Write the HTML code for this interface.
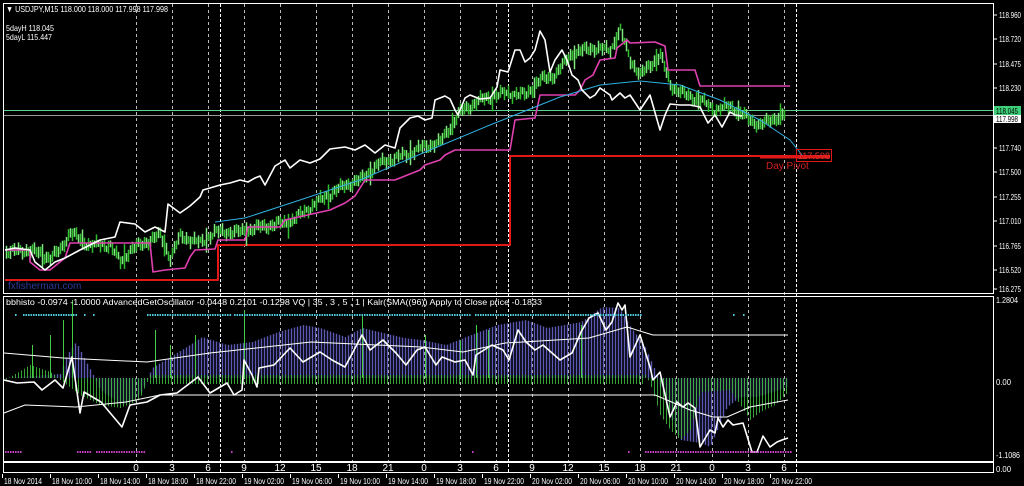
<!DOCTYPE html>
<html><head><meta charset="utf-8"><style>
html,body{margin:0;padding:0;background:#000;width:1024px;height:486px;overflow:hidden}
svg{display:block}
text{font-family:"Liberation Sans",sans-serif;font-size:9px;fill:#fff}
</style></head><body>
<svg id="s" width="1024" height="486" viewBox="0 0 1024 486" xmlns="http://www.w3.org/2000/svg">
<rect width="1024" height="486" fill="#000"/>
<g id="grid"></g>
<g id="bars"></g>
<g id="main"></g>
<rect x="3.5" y="3.5" width="990" height="290" fill="none" stroke="#fff" stroke-width="1"/>
<rect x="3.5" y="296.5" width="990" height="165" fill="none" stroke="#fff" stroke-width="1"/>
<rect x="3.5" y="462.5" width="990" height="10" fill="none" stroke="#fff" stroke-width="1"/>
<g id="txt"></g>
</svg>
<script>
var NS="http://www.w3.org/2000/svg";
function el(p,t,a,txt){var e=document.createElementNS(NS,t);for(var k in a)e.setAttribute(k,a[k]);if(txt!=null)e.textContent=txt;document.getElementById(p).appendChild(e);return e;}
function pl(p,pts,c,w){el(p,'polyline',{points:pts.map(function(q){return q.join(',')}).join(' '),fill:'none',stroke:c,'stroke-width':w||1,'stroke-linejoin':'round'});}
function interp(pts,x){for(var i=0;i<pts.length-1;i++){if(x>=pts[i][0]&&x<=pts[i+1][0]){var t=(x-pts[i][0])/(pts[i+1][0]-pts[i][0]);return pts[i][1]+t*(pts[i+1][1]-pts[i][1]);}}return pts[pts.length-1][1];}
for(var x=136;x<=784;x+=36){el('grid','line',{x1:x+.5,y1:4,x2:x+.5,y2:461,stroke:'#bbb','stroke-dasharray':'3 3','stroke-width':1});}
[220,508,796].forEach(function(x){el('grid','line',{x1:x+.5,y1:4,x2:x+.5,y2:472,stroke:'#fff','stroke-dasharray':'3 2','stroke-width':1});});
var Z=378;
var purp=[[5,378],[60,374],[67,355],[76,342],[84,358],[93,375],[100,390],[122,405],[140,395],[152,368],[185,348],[202,337],[227,345],[252,342],[278,332],[303,325],[320,328],[345,337],[362,328],[379,332],[404,338],[421,340],[446,345],[471,335],[497,325],[526,320],[547,328],[581,322],[602,307],[619,308],[631,328],[644,345],[657,375],[660,387],[673,423],[680,440],[700,443],[710,447],[720,423],[727,407],[740,397],[757,397],[788,387]];
for(var x=6;x<=788;x+=3){var y=interp(purp,x);el('bars','line',{x1:x+.5,y1:Z,x2:x+.5,y2:y,stroke:'#5a5ab4','stroke-width':1.4});}
var grn=[[5,380],[30,365],[50,372],[60,380],[80,395],[100,405],[120,408],[139,400],[150,375],[645,375],[650,384],[660,415],[670,430],[680,440],[690,430],[700,392],[730,390],[740,405],[750,420],[760,412],[775,405],[788,392]];
for(var x=6;x<=788;x+=3){var y=interp(grn,x);var y0=(x>=150&&x<645)?384:Z;el('bars','line',{x1:x+.5,y1:y0,x2:x+.5,y2:y,stroke:'#3cb43c','stroke-width':0.9});}
[[32,345],[50,335],[63,320],[72,300],[195,335],[244,310],[362,315],[425,335],[476,325],[488,330],[581,325],[155,330],[170,345],[460,340]].forEach(function(s){el('bars','line',{x1:s[0]+.5,y1:Z,x2:s[0]+.5,y2:s[1],stroke:'#4c4','stroke-width':1});});
pl('bars',[[4,353],[63,358],[147,362],[210,353],[311,342],[421,347],[463,352],[505,343],[589,338],[627,327],[653,335],[788,335]],'#fff',1);
pl('bars',[[4,413],[25,405],[76,407],[126,402],[160,395],[252,395],[600,395],[655,395],[667,400],[690,410],[713,417],[727,417],[750,407],[788,400]],'#fff',1);
pl('bars',[[4,380],[17,383],[34,382],[42,390],[55,380],[63,388],[72,357],[80,413],[84,392],[101,402],[122,427],[130,405],[147,402],[160,395],[177,393],[198,377],[210,393],[227,383],[234,395],[242,390],[244,360],[252,375],[257,387],[259,368],[274,365],[290,348],[303,362],[320,352],[332,360],[345,367],[362,335],[370,350],[383,340],[396,353],[406,365],[417,350],[425,347],[436,365],[442,357],[455,362],[465,360],[473,375],[476,355],[492,345],[503,350],[509,360],[518,330],[526,342],[535,350],[543,345],[560,360],[572,353],[581,332],[589,318],[598,313],[606,330],[612,322],[618,303],[622,310],[625,305],[630,357],[640,335],[650,367],[653,380],[660,372],[670,417],[677,402],[683,407],[688,403],[695,408],[700,447],[710,430],[715,433],[718,418],[723,427],[728,420],[733,425],[743,423],[752,452],[757,452],[763,436],[770,447],[777,442],[782,440],[788,438]],'#fff',1.6);
function dots(y,c,ranges){ranges.forEach(function(r){for(var x=r[0];x<=r[1];x+=2.5)el('bars','rect',{x:x,y:y,width:1.6,height:2,fill:c});});}
dots(314,'#4cc8d8',[[15,16],[23,77],[84,85],[93,94],[147,230],[234,470],[475,640],[733,734],[743,744]]);
dots(451,'#c040c0',[[5,22],[77,90],[96,145],[231,232],[472,473],[628,629],[645,790]]);
el('main','line',{x1:4,y1:110.5,x2:993,y2:110.5,stroke:'#5fd08a','stroke-width':1});
el('main','line',{x1:4,y1:115.5,x2:993,y2:115.5,stroke:'#999','stroke-width':1});
pl('main',[[5,280],[218,280],[218,245],[510,245],[510,156],[830,156]],'#e01818',2);
pl('main',[[760,157],[830,157]],'#e01818',3);
var gc=[[5,252],[30,250],[50,258],[60,250],[70,232],[80,240],[90,245],[110,245],[120,262],[130,250],[150,240],[160,235],[170,258],[180,236],[200,243],[215,232],[240,232],[260,227],[290,222],[320,200],[345,185],[360,180],[380,163],[405,155],[420,148],[440,142],[460,112],[480,100],[505,93],[525,95],[540,80],[555,75],[570,55],[590,48],[610,50],[620,30],[630,60],[640,75],[660,55],[670,85],[685,95],[700,100],[715,110],[730,106],[750,120],[760,125],[775,118],[785,114]];
for(var x=6;x<=785;x+=2){var c=interp(gc,x);var n=Math.sin(x*0.9)*2+Math.sin(x*0.31)*2;var h=6+Math.abs(Math.sin(x*0.77))*7;if(x%41<2)h+=12;var yc=c+n;
el('main','line',{x1:x+.5,y1:yc-h/2,x2:x+.5,y2:yc+h/2,stroke:(x%4==0)?'#2fbf2f':'#7fe87f','stroke-width':1.5});}
pl('main',[[5,250],[30,250],[30,262],[40,270],[50,270],[60,262],[65,258],[70,243],[150,243],[153,272],[165,270],[185,268],[190,257],[195,250],[215,249],[218,240],[245,240],[248,227],[280,227],[285,220],[330,210],[345,203],[355,196],[365,180],[395,180],[420,170],[425,165],[440,160],[445,155],[455,150],[510,150],[515,120],[535,118],[540,95],[575,95],[580,90],[585,80],[593,75],[600,60],[615,58],[617,48],[627,40],[630,43],[655,42],[665,46],[668,70],[695,70],[700,86],[790,86]],'#e040b0',1.6);
pl('main',[[215,222],[245,218],[300,200],[360,180],[430,150],[490,125],[560,97],[600,85],[640,81],[680,85],[720,100],[760,120],[790,140],[802,155]],'#30b0e0',1);
pl('main',[[5,250],[15,248],[30,250],[35,262],[45,270],[55,262],[65,258],[80,250],[100,240],[115,237],[120,222],[135,224],[145,232],[155,227],[165,232],[168,204],[180,213],[190,206],[200,197],[203,190],[210,188],[220,185],[230,183],[240,180],[248,182],[255,178],[260,176],[265,185],[275,166],[285,160],[290,168],[300,160],[310,163],[320,159],[330,149],[345,147],[355,150],[365,145],[375,153],[385,145],[395,148],[400,128],[410,118],[418,116],[425,120],[432,118],[435,100],[445,96],[450,99],[455,110],[458,115],[465,98],[470,95],[480,99],[490,98],[497,87],[500,70],[508,72],[515,50],[520,50],[525,62],[530,58],[535,50],[540,31],[545,40],[550,72],[555,60],[562,50],[567,60],[572,75],[578,80],[582,90],[590,98],[595,95],[600,88],[610,95],[612,100],[620,93],[625,98],[630,95],[640,110],[650,95],[660,130],[665,115],[670,104],[680,105],[690,105],[700,107],[708,123],[715,115],[722,127],[730,112],[735,115],[742,116]],'#fff',1.6);
el('main','rect',{x:796.5,y:149.5,width:35,height:12,fill:'none',stroke:'#e01818'});
el('main','text',{x:798,y:159,style:'fill:#e03030;font-size:9.5px',textLength:32,lengthAdjust:'spacingAndGlyphs'},'117.598');
el('main','text',{x:766,y:169,style:'fill:#d02020;font-size:10px'},'Day Pivot');
el('txt','text',{x:6,y:12,textLength:162,lengthAdjust:'spacingAndGlyphs',style:'font-size:8.5px'},'\u25BC USDJPY,M15  118.000 118.000 117.998 117.998');
el('txt','text',{x:6,y:31,textLength:48,lengthAdjust:'spacingAndGlyphs',style:'font-size:8.5px'},'5dayH 118.045');
el('txt','text',{x:6,y:40,textLength:46,lengthAdjust:'spacingAndGlyphs',style:'font-size:8.5px'},'5dayL 115.447');
el('txt','text',{x:8,y:289,style:'fill:#2a3a9a;font-size:10px'},'fxfisherman.com');
el('txt','text',{x:6,y:305,style:'font-size:8.5px',textLength:536,lengthAdjust:'spacingAndGlyphs'},'bbhisto -0.0974 -1.0000  AdvancedGetOscillator -0.0448 0.2101 -0.1298  VQ | 35 , 3 , 5 , 1 |  Kalr(SMA((96)) Apply to Close price -0.1833');
var pr=[['118.960',18],['118.720',42],['118.475',67],['118.230',91],['117.740',151],['117.500',175],['117.255',200],['117.010',224],['116.765',249],['116.520',273],['116.275',292]];
function lab(x,y,s,len,st){el('txt','text',{x:x,y:y,style:'font-size:8px;'+(st||''),textLength:len,lengthAdjust:'spacingAndGlyphs'},s);}
pr.forEach(function(p){el('txt','line',{x1:994,y1:p[1]-3,x2:997,y2:p[1]-3,stroke:'#fff'});lab(999,p[1],p[0],22);});
el('txt','rect',{x:994,y:106,width:27,height:9,fill:'#3ccf78'});
lab(996,114,'118.045',22,'fill:#000');
el('txt','rect',{x:994,y:115,width:27,height:8,fill:'#fff'});
lab(996,122,'117.998',22,'fill:#000');
lab(996,303,'1.2804',22);
lab(996,385,'0.00',15);
lab(996,458,'-1.1086',24);
lab(996,472,'0.00',15);
var hs=['0','3','6','9','12','15','18','21','0','3','6','9','12','15','18','21','0','3','6'];
hs.forEach(function(h,i){el('txt','text',{x:136+i*36,y:471,'text-anchor':'middle',style:'font-size:10px'},h);});
var ds=['18 Nov 2014','18 Nov 10:00','18 Nov 14:00','18 Nov 18:00','18 Nov 22:00','19 Nov 02:00','19 Nov 06:00','19 Nov 10:00','19 Nov 14:00','19 Nov 18:00','19 Nov 22:00','20 Nov 02:00','20 Nov 06:00','20 Nov 10:00','20 Nov 14:00','20 Nov 18:00','20 Nov 22:00'];
ds.forEach(function(d,i){var x=i==0?4:52+(i-1)*48;el('txt','line',{x1:x-1.5,y1:474,x2:x-1.5,y2:478,stroke:'#fff'});el('txt','text',{x:x,y:484,style:'font-size:8px',textLength:i==0?38:40,lengthAdjust:'spacingAndGlyphs'},d);});
</script>
</body></html>
